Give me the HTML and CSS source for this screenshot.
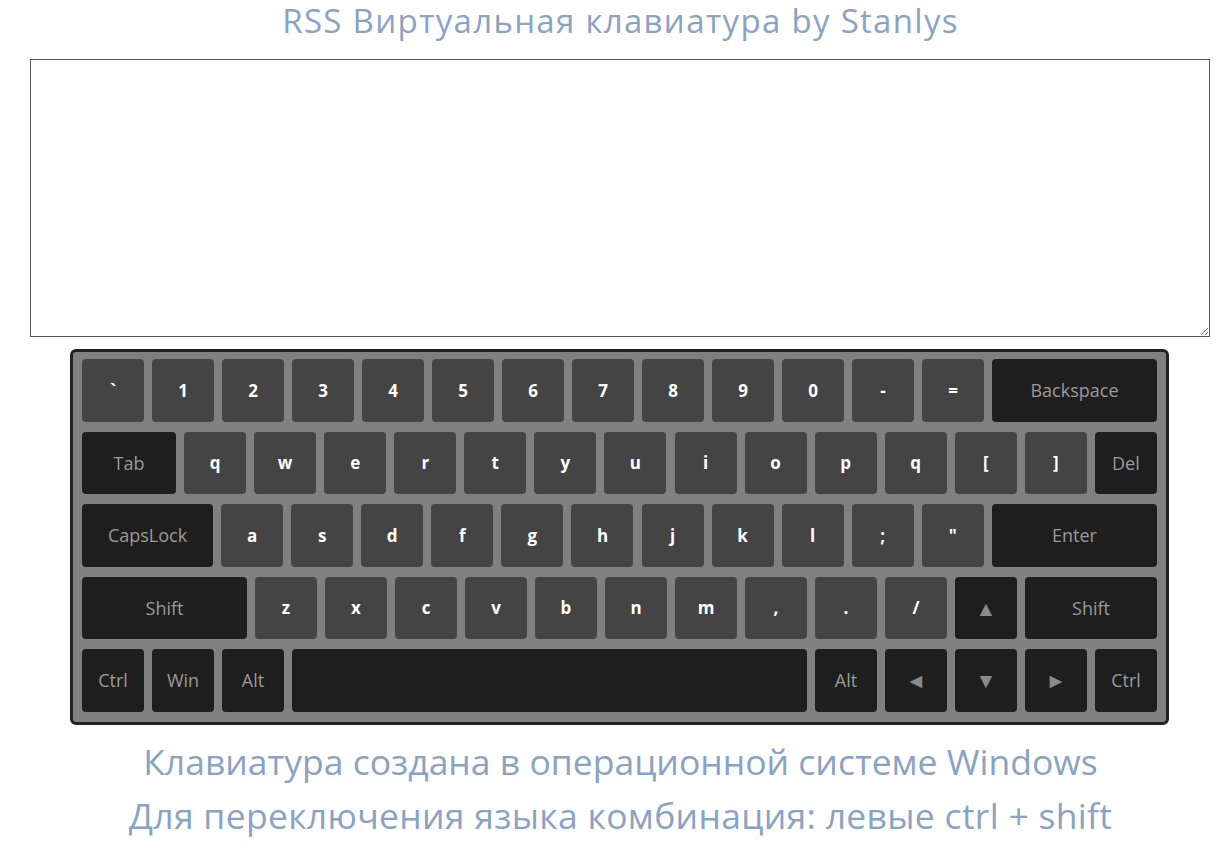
FILE: index.html
```html
<!DOCTYPE html>
<html lang="ru">
<head>
<meta charset="utf-8">
<title>RSS Виртуальная клавиатура</title>
<link rel="stylesheet" href="styles.css">
</head>
<body>
<h1 class="title">RSS Виртуальная клавиатура by Stanlys</h1>
<textarea class="output"></textarea>
<div class="keyboard">
  <div class="row">
    <div class="key">`</div><div class="key">1</div><div class="key">2</div><div class="key">3</div><div class="key">4</div><div class="key">5</div><div class="key">6</div><div class="key">7</div><div class="key">8</div><div class="key">9</div><div class="key">0</div><div class="key">-</div><div class="key">=</div>
    <div class="key fn w165">Backspace</div>
  </div>
  <div class="row">
    <div class="key fn w94">Tab</div>
    <div class="key">q</div><div class="key">w</div><div class="key">e</div><div class="key">r</div><div class="key">t</div><div class="key">y</div><div class="key">u</div><div class="key">i</div><div class="key">o</div><div class="key">p</div><div class="key">q</div><div class="key">[</div><div class="key">]</div>
    <div class="key fn">Del</div>
  </div>
  <div class="row">
    <div class="key fn w131">CapsLock</div>
    <div class="key">a</div><div class="key">s</div><div class="key">d</div><div class="key">f</div><div class="key">g</div><div class="key">h</div><div class="key">j</div><div class="key">k</div><div class="key">l</div><div class="key">;</div><div class="key">"</div>
    <div class="key fn w165">Enter</div>
  </div>
  <div class="row">
    <div class="key fn w165">Shift</div>
    <div class="key">z</div><div class="key">x</div><div class="key">c</div><div class="key">v</div><div class="key">b</div><div class="key">n</div><div class="key">m</div><div class="key">,</div><div class="key">.</div><div class="key">/</div>
    <div class="key fn arrow">▲</div>
    <div class="key fn w132">Shift</div>
  </div>
  <div class="row">
    <div class="key fn">Ctrl</div><div class="key fn">Win</div><div class="key fn">Alt</div>
    <div class="key fn space"></div>
    <div class="key fn">Alt</div><div class="key fn arrow">◄</div><div class="key fn arrow">▼</div><div class="key fn arrow">►</div><div class="key fn">Ctrl</div>
  </div>
</div>
<p class="note">Клавиатура создана в операционной системе Windows</p>
<p class="note wide">Для переключения языка комбинация: левые ctrl + shift</p>
</body>
</html>
```
FILE: styles.css
```css
body {
  margin: 0;
  font-family: "Open Sans", "Noto Sans", sans-serif;
  background: #ffffff;
}
.title {
  margin: 0;
  padding-left: 12px;
  text-align: center;
  font-weight: 400;
  font-size: 33px;
  letter-spacing: 1.3px;
  line-height: 41px;
  color: #8aa2c3;
}
.output {
  display: block;
  box-sizing: border-box;
  width: 1180px;
  height: 278px;
  margin: 18px 0 0 30px;
  border: 1px solid #555555;
  padding: 2px;
  font-family: "Liberation Mono", monospace;
}
.keyboard {
  box-sizing: border-box;
  width: 1099px;
  margin: 12px 0 0 70px;
  border: 3px solid #232223;
  border-radius: 6px;
  background: #808080;
  padding: 7px 9px 10px 9px;
  display: flex;
  flex-direction: column;
  gap: 10px;
}
.row {
  display: flex;
  justify-content: space-between;
}
.key {
  box-sizing: border-box;
  width: 62px;
  height: 62.5px;
  flex: none;
  border-radius: 4px;
  background: #444444;
  color: #ffffff;
  font-weight: 700;
  font-size: 17px;
  display: flex;
  align-items: center;
  justify-content: center;
}
.key.fn {
  background: #1f1e1f;
  color: #9a9a9a;
  font-weight: 400;
  font-size: 18px;
}
.key.arrow {
  font-size: 21px;
  color: #8a8a8a;
}
.w94 { width: 94px; }
.w131 { width: 131px; }
.w132 { width: 132px; }
.w165 { width: 165px; }
.space { width: 515px; }
.note {
  margin: 0;
  padding-left: 12px;
  text-align: center;
  font-size: 35.5px;
  line-height: 54px;
  color: #8aa2c3;
}
.note.wide {
  letter-spacing: 0.3px;
}
.keyboard + .note {
  margin-top: 9px;
}
```
